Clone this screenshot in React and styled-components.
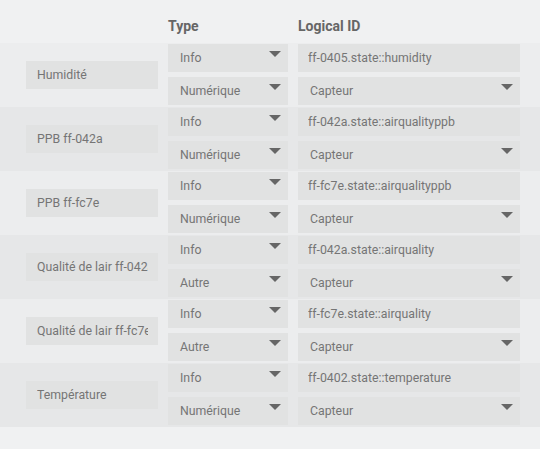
import React from 'react';
import styled, {createGlobalStyle} from 'styled-components';

const GlobalStyle = createGlobalStyle`
    body {
        margin: 0;
        background: #f0f1f2;
        font-family: Roboto, "Liberation Sans", sans-serif;
    }
`

const Page = styled.div`
    width: 540px;
    height: 449px;
    background: #f0f1f2;
`

const Columns = styled.div`
    display: grid;
    grid-template-columns: 132px 120px 222px;
    column-gap: 10px;
    padding-left: 26px;
`

const Header = styled(Columns)`
    height: 43px;
    align-items: end;
    padding-bottom: 9px;
    box-sizing: border-box;
`

const HeadCell = styled.div`
    font-size: 14px;
    font-weight: 700;
    color: #666666;
    line-height: 16px;
`

const Row = styled(Columns)`
    height: 64px;
    box-sizing: border-box;
    padding-top: 1px;
    background: ${props => props.dark ? '#e6e7e8' : '#ecedee'};
`

const Stack = styled.div`
    display: flex;
    flex-direction: column;
    gap: 5px;
`

const NameCell = styled.div`
    display: flex;
    align-items: center;
    height: 61px;
`

// 텍스트 필드 (이름, logical id)
const Field = styled.input`
    display: block;
    width: 100%;
    height: 28px;
    box-sizing: border-box;
    border: none;
    outline: none;
    margin: 0;
    padding: 0 10px 0 ${props => props.pad || 11}px;
    background: #e1e2e2;
    color: #757575;
    font-family: Roboto, "Liberation Sans", sans-serif;
    font-size: 12.3px;
`

const Select = styled.div`
    position: relative;
    height: 28px;
    display: flex;
    align-items: center;
    padding-left: 12px;
    background: #e1e2e2;
    color: #757575;
    font-size: 12.3px;
`

const Arrow = styled.span`
    position: absolute;
    right: 7px;
    top: 7px;
    width: 0;
    height: 0;
    border-left: 6px solid transparent;
    border-right: 6px solid transparent;
    border-top: 6px solid #666666;
`

const rows = [
    {name: 'Humidité', kind: 'Numérique', id: 'ff-0405.state::humidity'},
    {name: 'PPB ff-042a', kind: 'Numérique', id: 'ff-042a.state::airqualityppb'},
    {name: 'PPB ff-fc7e', kind: 'Numérique', id: 'ff-fc7e.state::airqualityppb'},
    {name: 'Qualité de lair ff-042a', kind: 'Autre', id: 'ff-042a.state::airquality'},
    {name: 'Qualité de lair ff-fc7e', kind: 'Autre', id: 'ff-fc7e.state::airquality'},
    {name: 'Température', kind: 'Numérique', id: 'ff-0402.state::temperature'},
]

const App = () => {
    return (
        <Page>
            <GlobalStyle/>
            <Header>
                <div></div>
                <HeadCell>Type</HeadCell>
                <HeadCell>Logical ID</HeadCell>
            </Header>
            {rows.map((r, i) => (
                <Row key={r.name} dark={i % 2 === 1}>
                    <NameCell>
                        <Field readOnly value={r.name}/>
                    </NameCell>
                    <Stack>
                        <Select>Info<Arrow/></Select>
                        <Select>{r.kind}<Arrow/></Select>
                    </Stack>
                    <Stack>
                        <Field readOnly value={r.id} pad={10}/>
                        <Select>Capteur<Arrow/></Select>
                    </Stack>
                </Row>
            ))}
        </Page>
    )
}

export default App;
